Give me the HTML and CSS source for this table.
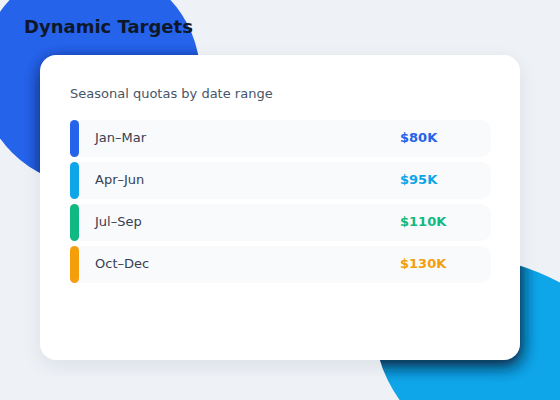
FILE: index.html
```html
<!DOCTYPE html>
<html lang="en">
<head>
    <meta charset="UTF-8">
    <title>Dynamic Targets</title>
    <link rel="stylesheet" href="styles.css">
</head>
<body>
<svg class="backdrop" width="560" height="400" viewBox="0 0 560 400" aria-hidden="true">
    <defs>
        <clipPath id="blobClip">
            <circle cx="90" cy="75" r="110"/>
            <ellipse cx="515" cy="372" rx="150" ry="100" transform="rotate(30 515 372)"/>
        </clipPath>
        <filter id="soft" x="-20%" y="-20%" width="140%" height="140%">
            <feGaussianBlur stdDeviation="8"/>
        </filter>
    </defs>
    <circle cx="90" cy="75" r="110" fill="#2563eb"/>
    <ellipse cx="515" cy="372" rx="150" ry="100" transform="rotate(30 515 372)" fill="#0ea5e9"/>
    <g clip-path="url(#blobClip)">
        <rect x="42" y="61" width="480" height="305" rx="16" fill="#0f172a" opacity="0.9" filter="url(#soft)"/>
    </g>
</svg>
<div class="page">
    <h1>Dynamic Targets</h1>
    <div class="card">
        <p class="subtitle">Seasonal quotas by date range</p>
        <div class="quota-list">
            <div class="quota-row">
                <span class="bar blue"></span>
                <span class="range">Jan–Mar</span>
                <span class="amount blue-text">$80K</span>
            </div>
            <div class="quota-row">
                <span class="bar sky"></span>
                <span class="range">Apr–Jun</span>
                <span class="amount sky-text">$95K</span>
            </div>
            <div class="quota-row">
                <span class="bar green"></span>
                <span class="range">Jul–Sep</span>
                <span class="amount green-text">$110K</span>
            </div>
            <div class="quota-row">
                <span class="bar amber"></span>
                <span class="range">Oct–Dec</span>
                <span class="amount amber-text">$130K</span>
            </div>
        </div>
    </div>
</div>
</body>
</html>
```

FILE: styles.css
```css
body {
    margin: 0;
    background-color: #eef2f7;
    font-family: "DejaVu Sans", Verdana, sans-serif;
    color: #334155;
}
.backdrop {
    position: absolute;
    top: 0;
    left: 0;
    z-index: 0;
}
.page {
    position: relative;
    z-index: 1;
    padding: 16px 24px;
}
h1 {
    margin: 0;
    font-size: 18px;
    line-height: 21px;
    font-weight: bold;
    color: #0f172a;
}
.card {
    box-sizing: border-box;
    height: 305px;
    margin: 18px 16px 0;
    padding: 31px 29px 31px 30px;
    background-color: #ffffff;
    border-radius: 16px;
    box-shadow: 0 6px 20px rgba(15, 23, 42, 0.08);
}
.subtitle {
    margin: 0 0 19px;
    font-size: 13px;
    color: #475569;
}
.quota-list {
    display: flex;
    flex-direction: column;
    gap: 5px;
}
.quota-row {
    display: flex;
    align-items: center;
    height: 37px;
    background-color: #f8fafc;
    border-radius: 10px;
    font-size: 13px;
}
.bar {
    align-self: stretch;
    width: 9px;
    border-radius: 5px;
}
.range {
    flex: 1;
    margin-left: 16px;
    padding-bottom: 2px;
    color: #374151;
}
.amount {
    width: 91px;
    padding-bottom: 2px;
    font-weight: bold;
}
.blue { background-color: #2563eb; }
.sky { background-color: #0ea5e9; }
.green { background-color: #10b981; }
.amber { background-color: #f59e0b; }
.blue-text { color: #2563eb; }
.sky-text { color: #0ea5e9; }
.green-text { color: #10b981; }
.amber-text { color: #f59e0b; }
```
